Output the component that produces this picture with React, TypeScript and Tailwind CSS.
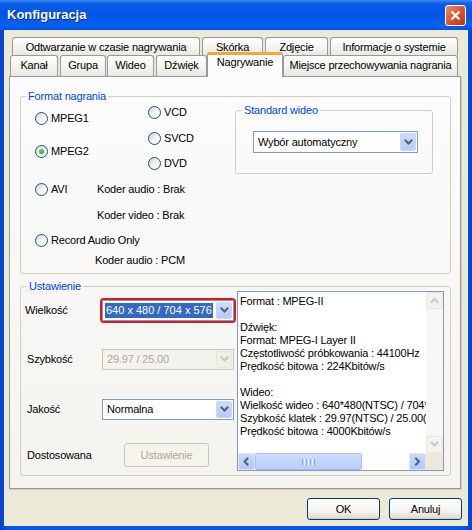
import type { ReactNode } from "react";

function Chevron({ dir = "down", color = "#4d6185" }: { dir?: "down" | "up" | "left" | "right"; color?: string }) {
  const paths = {
    down: "M1.5 2.5 L4.5 5.5 L7.5 2.5",
    up: "M1.5 6 L4.5 3 L7.5 6",
    left: "M5.5 1.5 L2.5 4.5 L5.5 7.5",
    right: "M3 1.5 L6 4.5 L3 7.5",
  };
  return (
    <svg width="9" height="9" viewBox="0 0 9 9">
      <path d={paths[dir]} fill="none" stroke={color} strokeWidth="2" strokeLinecap="square" />
    </svg>
  );
}

function Tab({ label, className, selected }: { label: string; className: string; selected?: boolean }) {
  if (selected) {
    return (
      <div
        className={`relative z-10 -mt-[3px] h-[25px] shrink-0 rounded-t-[3px] border-x border-t-[3px] border-x-[#919b9c] border-t-[#f2a73a] bg-[#fcfcfe] pt-[1px] text-center leading-[13px] ${className}`}
      >
        {label}
      </div>
    );
  }
  return (
    <div
      className={`shrink-0 rounded-t-[3px] border-x border-t border-[#919b9c] bg-[linear-gradient(#ffffff,#f3f2ed_60%,#e9e8e1)] pt-[3px] text-center leading-[13px] ${className}`}
    >
      {label}
    </div>
  );
}

function Radio({ label, checked, className = "" }: { label: string; checked?: boolean; className?: string }) {
  return (
    <div className={`flex h-[14px] items-center gap-[3px] ${className}`}>
      <span className="flex h-[13px] w-[13px] shrink-0 items-center justify-center rounded-full border border-[#1c5180] bg-[linear-gradient(135deg,#d6d5cf,#f7f7f4_60%,#ffffff)]">
        {checked ? <span className="h-[5px] w-[5px] rounded-full bg-[radial-gradient(circle_at_35%_35%,#63d463,#1f9a1f)]" /> : null}
      </span>
      <span className="whitespace-nowrap leading-[13px]">{label}</span>
    </div>
  );
}

function Combo({
  value,
  className,
  selected,
  disabled,
}: {
  value: string;
  className: string;
  selected?: boolean;
  disabled?: boolean;
}) {
  return (
    <div
      className={`flex shrink-0 border ${disabled ? "border-[#c9c7ba] bg-[#f3f2ec] text-[#aca899]" : "border-[#7f9db9] bg-white"} ${className}`}
    >
      <div className="flex min-w-0 flex-1 items-center p-[2px]">
        {selected ? (
          <span className="flex h-full w-full items-center overflow-hidden whitespace-nowrap bg-[#316ac5] pl-[1px] tracking-normal text-white">
            {value}
          </span>
        ) : (
          <span className="whitespace-nowrap pl-[2px]">{value}</span>
        )}
      </div>
      <div
        className={`m-[1px] flex w-[16px] items-center justify-center rounded-[2px] border ${disabled ? "border-[#e8e6dc] bg-[#efeee7]" : "border-[#c8d6fb] bg-[linear-gradient(#cddbfd,#b8cbf6)]"}`}
      >
        <Chevron color={disabled ? "#c9c7ba" : "#4d6185"} />
      </div>
    </div>
  );
}

function XpButton({ children, className, disabled }: { children: ReactNode; className: string; disabled?: boolean }) {
  return (
    <button
      type="button"
      disabled={disabled}
      className={`flex items-center justify-center rounded-[3px] border leading-[13px] ${disabled ? "border-[#c9c7ba] bg-[#f5f4ea] text-[#aca899]" : "border-[#003c74] bg-[linear-gradient(#ffffff,#f4f4f0_60%,#dcd8ce)] text-black shadow-[inset_0_-1px_0_#d6d0c5]"} ${className}`}
    >
      {children}
    </button>
  );
}

const infoLines = [
  "Format : MPEG-II",
  "",
  "Dźwięk:",
  "Format: MPEG-I Layer II",
  "Częstotliwość próbkowania : 44100Hz",
  "Prędkość bitowa : 224Kbitów/s",
  "",
  "Wideo:",
  "Wielkość wideo : 640*480(NTSC) / 704*576(PAL)",
  "Szybkość klatek : 29.97(NTSC) / 25.00(PAL)",
  "Prędkość bitowa : 4000Kbitów/s",
];

function InfoBox() {
  return (
    <div className="-mt-[2px] flex h-[180px] w-[207px] flex-col border border-[#7f9db9] bg-white">
      <div className="flex min-h-0 flex-1">
        <div className="min-w-0 flex-1 overflow-hidden pl-[2px] pt-[3px] leading-[13px]">
          {infoLines.map((line, i) => (
            <div key={i} className="h-[13px] whitespace-nowrap">
              {line}
            </div>
          ))}
        </div>
        <div className="flex w-[17px] flex-col bg-[#f8f7f3]">
          <div className="flex h-[17px] items-center justify-center rounded-[2px] border border-[#e9e7de] bg-[#f3f2ec]">
            <Chevron dir="up" color="#cdcac0" />
          </div>
          <div className="flex-1" />
          <div className="flex h-[17px] items-center justify-center rounded-[2px] border border-[#e9e7de] bg-[#f3f2ec]">
            <Chevron dir="down" color="#cdcac0" />
          </div>
        </div>
      </div>
      <div className="flex h-[17px]">
        <div className="flex w-[17px] items-center justify-center rounded-[2px] border border-[#dde6fd] bg-[linear-gradient(#cad9fd,#b4c8f6)]">
          <Chevron dir="left" />
        </div>
        <div className="flex flex-1 bg-[#fdfdfb]">
          <div className="flex w-[107px] items-center justify-center gap-[1px] rounded-[2px] border border-[#a9bff3] bg-[linear-gradient(#cfdcfd,#b9cdf8)]">
            <span className="h-[6px] w-[1px] bg-[#8aa6ea]" />
            <span className="h-[6px] w-[1px] bg-[#eef3ff]" />
            <span className="h-[6px] w-[1px] bg-[#8aa6ea]" />
            <span className="h-[6px] w-[1px] bg-[#eef3ff]" />
            <span className="h-[6px] w-[1px] bg-[#8aa6ea]" />
            <span className="h-[6px] w-[1px] bg-[#eef3ff]" />
            <span className="h-[6px] w-[1px] bg-[#8aa6ea]" />
          </div>
        </div>
        <div className="flex w-[17px] items-center justify-center rounded-[2px] border border-[#dde6fd] bg-[linear-gradient(#cad9fd,#b4c8f6)]">
          <Chevron dir="right" />
        </div>
        <div className="w-[17px] bg-[#ebe9d9]" />
      </div>
    </div>
  );
}

export default function App() {
  return (
    <div className="flex h-[530px] w-[472px] flex-col bg-[linear-gradient(90deg,#0842c8,#0a55e4_2%,#0a55e4_98%,#0842c8)] font-['Liberation_Sans',Arial,sans-serif] text-[11px] tracking-[-0.18px] text-black">
      {/* title bar */}
      <div className="flex h-[30px] shrink-0 items-center justify-between bg-[linear-gradient(#3d8cf5,#0a5ee8_12%,#0055e3_50%,#0463f4_85%,#0350dc)] pl-[7px] pr-[6px]">
        <span className="text-[13px] font-bold tracking-normal text-white [text-shadow:1px_1px_0_#0a2a8a]">Konfiguracja</span>
        <div className="flex h-[21px] w-[21px] items-center justify-center rounded-[3px] border border-white bg-[linear-gradient(135deg,#ec8d6c,#d7522c_55%,#b9330f)]">
          <svg width="11" height="11" viewBox="0 0 11 11">
            <path d="M1.5 1.5 L9.5 9.5 M9.5 1.5 L1.5 9.5" stroke="white" strokeWidth="2.2" />
          </svg>
        </div>
      </div>

      <div className="mx-[4px] mb-[4px] flex flex-1 flex-col bg-[#ece9d8]">
        {/* tabs */}
        <div className="pl-[6px] pt-[7px]">
          <div className="flex h-[18px] gap-[2px] pl-[2px]">
            <Tab label="Odtwarzanie w czasie nagrywania" className="h-[18px] w-[188px]" />
            <Tab label="Skórka" className="h-[18px] w-[61px]" />
            <Tab label="Zdjęcie" className="h-[18px] w-[63px]" />
            <Tab label="Informacje o systemie" className="h-[18px] w-[128px]" />
          </div>
          <div className="flex h-[21px] items-start">
            <Tab label="Kanał" className="mr-[2px] h-[21px] w-[48px]" />
            <Tab label="Grupa" className="mr-[1px] h-[21px] w-[46px]" />
            <Tab label="Wideo" className="mr-[2px] h-[21px] w-[47px]" />
            <Tab label="Dźwięk" className="h-[21px] w-[51px]" />
            <Tab label="Nagrywanie" selected className="w-[76px]" />
            <Tab label="Miejsce przechowywania nagrania" className="h-[21px] w-[175px]" />
          </div>
        </div>

        {/* tab panel */}
        <div className="ml-[5px] h-[413px] w-[452px] border border-[#919b9c] bg-[linear-gradient(#fcfcfe,#f4f3ee)] pl-[10px] pt-[13px] shadow-[1px_1px_0_#d0cebf]">
          <fieldset className="h-[184px] w-[431px] rounded-[3px] border border-[#d0d0bf]">
            <legend className="ml-[5px] px-[2px] leading-[13px] text-[#0046d5]">Format nagrania</legend>
            <div className="flex">
              <div className="w-[214px] pl-[14px]">
                <div className="flex">
                  <div className="w-[113px]">
                    <Radio label="MPEG1" className="mt-[8px]" />
                    <Radio label="MPEG2" checked className="mt-[19px]" />
                  </div>
                  <div>
                    <Radio label="VCD" className="mt-[2px]" />
                    <Radio label="SVCD" className="mt-[12px]" />
                    <Radio label="DVD" className="mt-[11px]" />
                  </div>
                </div>
                <div className="mt-[12px] flex h-[14px] items-center">
                  <div className="w-[62px]">
                    <Radio label="AVI" />
                  </div>
                  <span className="whitespace-nowrap">Koder audio : Brak</span>
                </div>
                <div className="mt-[12px] flex h-[14px] items-center whitespace-nowrap pl-[62px]">Koder video : Brak</div>
                <Radio label="Record Audio Only" className="mt-[11px]" />
                <div className="mt-[6px] flex h-[14px] items-center whitespace-nowrap pl-[60px]">Koder audio : PCM</div>
              </div>
              <fieldset className="mt-[1px] h-[70px] w-[198px] rounded-[3px] border border-[#d0d0bf]">
                <legend className="ml-[6px] px-[2px] leading-[13px] text-[#0046d5]">Standard wideo</legend>
                <div className="ml-[17px] mt-[14px]">
                  <Combo value="Wybór automatyczny" className="h-[22px] w-[165px]" />
                </div>
              </fieldset>
            </div>
          </fieldset>

          <fieldset className="mt-[6px] h-[196px] w-[431px] rounded-[3px] border border-[#d0d0bf]">
            <legend className="ml-[6px] px-[2px] leading-[13px] text-[#0046d5]">Ustawienie</legend>
            <div className="flex">
              <div className="w-[216px]">
                <div className="mt-[5px] flex h-[25px] items-center">
                  <span className="w-[79px] pl-[4px]">Wielkość</span>
                  <div className="h-[25px] w-[136px] rounded-[4px] border-2 border-[#dc1820]">
                    <Combo value="640 x 480 / 704 x 576" selected className="h-[21px] w-[132px]" />
                  </div>
                </div>
                <div className="mt-[26px] flex h-[21px] items-center">
                  <span className="w-[81px] pl-[6px]">Szybkość</span>
                  <Combo value="29.97 / 25.00" disabled className="h-[21px] w-[132px]" />
                </div>
                <div className="mt-[29px] flex h-[21px] items-center">
                  <span className="w-[81px] pl-[6px]">Jakość</span>
                  <Combo value="Normalna" className="h-[21px] w-[132px]" />
                </div>
                <div className="mt-[23px] flex h-[24px] items-center">
                  <span className="w-[103px] pl-[6px]">Dostosowana</span>
                  <XpButton disabled className="h-[24px] w-[85px]">
                    Ustawienie
                  </XpButton>
                </div>
              </div>
              <InfoBox />
            </div>
          </fieldset>
        </div>

        {/* dialog buttons */}
        <div className="mt-[9px] flex justify-end gap-[9px] pr-[6px]">
          <XpButton className="h-[22px] w-[73px]">OK</XpButton>
          <XpButton className="h-[22px] w-[73px]">Anuluj</XpButton>
        </div>
      </div>
    </div>
  );
}
